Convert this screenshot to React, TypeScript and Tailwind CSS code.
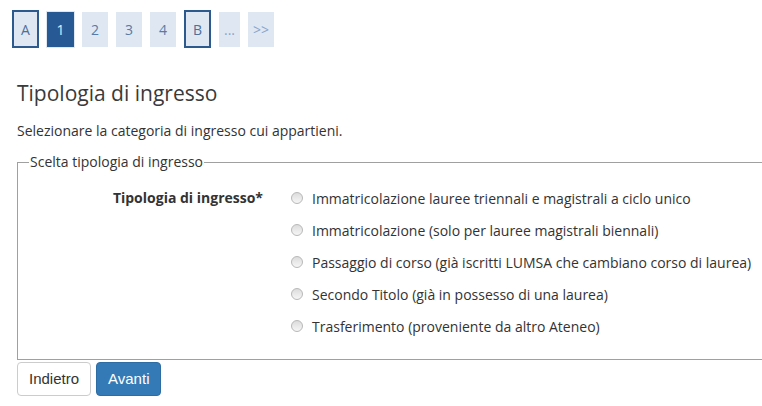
import React from 'react';

const pages = [
  { label: 'A', kind: 'edge' },
  { label: '1', kind: 'active' },
  { label: '2', kind: 'page' },
  { label: '3', kind: 'page' },
  { label: '4', kind: 'page' },
  { label: 'B', kind: 'edge' },
  { label: '...', kind: 'more' },
  { label: '>>', kind: 'more' },
];

const options = [
  'Immatricolazione lauree triennali e magistrali a ciclo unico',
  'Immatricolazione (solo per lauree magistrali biennali)',
  'Passaggio di corso (già iscritti LUMSA che cambiano corso di laurea)',
  'Secondo Titolo (già in possesso di una laurea)',
  'Trasferimento (proveniente da altro Ateneo)',
];

function PageItem({ label, kind }: { label: string; kind: string }) {
  const base = 'flex items-center justify-center text-[14px]';
  if (kind === 'edge') {
    return (
      <div className={`${base} w-[27px] h-[38px] border-2 border-[#2d5a8c] bg-[#dfe8f2] text-[#4e6f9a]`}>
        {label}
      </div>
    );
  }
  if (kind === 'active') {
    return (
      <div className={`${base} w-[27px] h-[35px] bg-[#275a94] text-[#e4ecf5] outline outline-1 outline-[#dfe8f2]`}>
        {label}
      </div>
    );
  }
  if (kind === 'more') {
    return (
      <div className={`${base} ${label === '...' ? 'w-[21px]' : 'w-[26px]'} h-[35px] bg-[#dfe8f2] text-[#8aa5c7] text-[12px]`}>
        {label}
      </div>
    );
  }
  return (
    <div className={`${base} w-[26px] h-[35px] bg-[#dfe8f2] text-[#5a7aa5]`}>{label}</div>
  );
}

function Radio() {
  return (
    <span className="inline-block w-[12px] h-[12px] rounded-full border border-[#b8b8b8] bg-gradient-to-b from-[#dcdcdc] to-[#f6f6f6] shrink-0" />
  );
}

export default function App() {
  return (
    <div
      className="w-[762px] h-[406px] overflow-hidden bg-white text-[#333] pl-[17px]"
      style={{ fontFamily: '"Open Sans", sans-serif' }}
    >
      <div className="flex items-center gap-[8px] h-[38px] mt-[10px] ml-[-5px]">
        {pages.map((p) => (
          <PageItem key={p.label} label={p.label} kind={p.kind} />
        ))}
      </div>

      <h2 className="mt-[30px] text-[21px] leading-[31px] text-[#3a3a3a]">Tipologia di ingresso</h2>
      <p className="mt-[12px] text-[14px] leading-[20px]">
        Selezionare la categoria di ingresso cui appartieni.
      </p>

      <fieldset className="mt-[11px] w-full border-y border-l border-r-0 border-[#a0a0a0] pt-[10px] pb-[17px]">
        <legend className="ml-[11px] px-[1px] text-[14px] leading-[20px]">
          Scelta tipologia di ingresso
        </legend>
        <div className="flex">
          <div className="w-[245px] text-right font-bold text-[14px] leading-[32px]">
            Tipologia di ingresso*
          </div>
          <div className="ml-[28px] flex flex-col">
            {options.map((o) => (
              <label key={o} className="flex items-center h-[32px] text-[14px]">
                <Radio />
                <span className="ml-[9px]">{o}</span>
              </label>
            ))}
          </div>
        </div>
      </fieldset>

      <div
        className="mt-[2px] flex gap-[5px]"
        style={{ fontFamily: '"Liberation Sans", Arial, sans-serif' }}
      >
        <button className="h-[34px] px-[11px] text-[15px] bg-white border border-[#ccc] rounded-[4px] text-[#333]">
          Indietro
        </button>
        <button className="h-[34px] px-[11px] text-[15px] bg-[#337ab7] border border-[#2e6da4] rounded-[4px] text-white">
          Avanti
        </button>
      </div>
    </div>
  );
}
